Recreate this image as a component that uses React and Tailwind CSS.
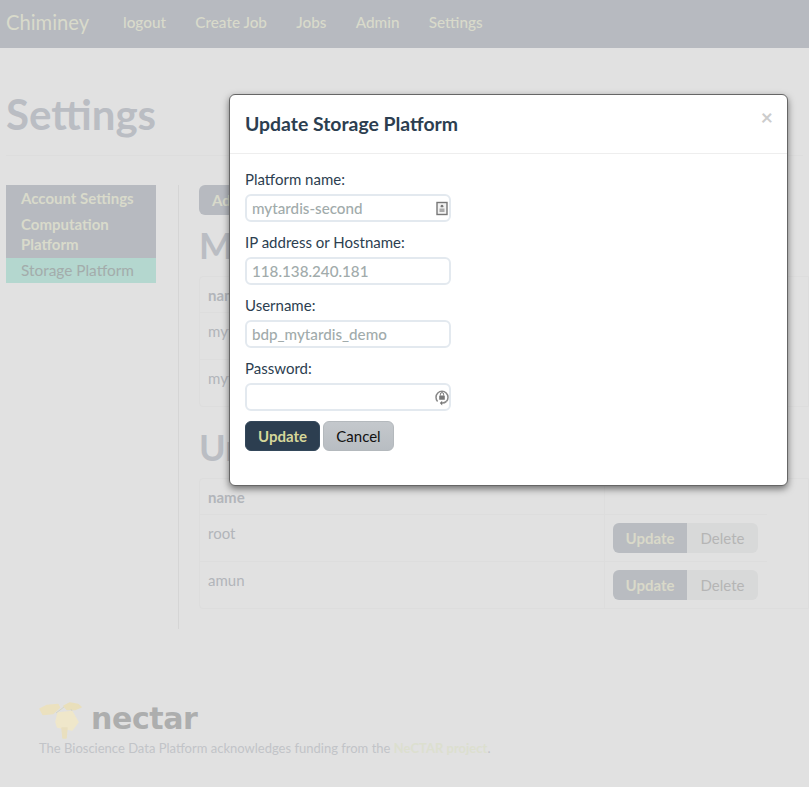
const navItems = ["logout", "Create Job", "Jobs", "Admin", "Settings"];

function Field({ label, value, icon }) {
  return (
    <div className="mb-[10px]">
      <div className="text-[15px] leading-[21px] mb-[4px] text-[#2c3e50]">{label}</div>
      <div className="relative w-[206px] h-[28px]">
        <input
          readOnly
          value={value}
          className="w-full h-full border-2 border-[#e3e9ef] rounded-[6px] px-[5px] text-[15.2px] font-medium text-[#a1abab] bg-white outline-none"
        />
        {icon && <span className="absolute right-0 top-[5px]">{icon}</span>}
      </div>
    </div>
  );
}

function CardIcon() {
  return (
    <svg width="18" height="18" viewBox="0 0 18 18">
      <rect x="4" y="3.5" width="10" height="12" fill="#f2f2f2" stroke="#777" strokeWidth="1.4" />
      <path d="M9 5.8a1.5 1.5 0 0 1 1.2 2.4H7.8A1.5 1.5 0 0 1 9 5.8z" fill="#777" />
      <rect x="6.5" y="9.5" width="5" height="3.5" fill="#aaa" />
    </svg>
  );
}

function KeyIcon() {
  return (
    <svg width="18" height="18" viewBox="0 0 18 18" fill="none">
      <path d="M4.6 13.4a6 6 0 1 1 8.8 0" stroke="#888" strokeWidth="1.5" />
      <path d="M13.4 13.4a6 6 0 0 1-4.4 1.7" stroke="#888" strokeWidth="1.5" />
      <path d="M9.2 12.8l-2.4 2.3 2.4 2.3z" fill="#777" />
      <rect x="6.2" y="7.5" width="5.6" height="4.2" rx="0.5" fill="#777" />
      <path d="M7.4 7.5V6.2a1.6 1.6 0 0 1 3.2 0v1.3" stroke="#777" strokeWidth="1" />
    </svg>
  );
}

function Table({ rows }) {
  return (
    <div className="relative w-[610px] border border-[#dddddd] rounded-l-[4px] text-[15px] leading-[20px]">
      <div className="flex h-[36px] border-b border-[#dddddd] w-[567px]">
        <div className="w-[405px] border-r border-[#dddddd] pl-[8px] pt-[8px] font-bold text-[#b2b5ba]">name</div>
      </div>
      {rows.map((r, i) => (
        <div key={r} className={"flex w-[567px] " + (i < rows.length - 1 ? "h-[47px] border-b border-[#dddddd]" : "h-[46px]")}>
          <div className="w-[405px] border-r border-[#dddddd] pl-[8px] pt-[8px] text-[#b2b5ba]">{r}</div>
          <div className="pl-[8px] pt-[8px] flex">
            <span className="w-[74px] h-[30px] bg-[#b9bcc1] rounded-l-[6px] text-[#d9d9c9] font-bold flex items-center justify-center text-[15px]">Update</span>
            <span className="w-[71px] h-[30px] bg-[#d8d9d9] rounded-r-[6px] text-[#b5b5b5] flex items-center justify-center text-[15px]">Delete</span>
          </div>
        </div>
      ))}
    </div>
  );
}

export default function App() {
  return (
    <div className="relative h-[787px] w-[809px] overflow-hidden bg-[#e1e1e1] font-['Lato',sans-serif]">
      <nav className="h-[48px] bg-[#b7bac0] flex items-center pl-[6px] pb-[3px] text-[#d9dacb]">
        <span className="text-[20.2px] w-[117px]">Chiminey</span>
        <div className="flex gap-[29.3px] text-[15.3px] font-medium">
          {navItems.map((n) => (
            <span key={n}>{n}</span>
          ))}
        </div>
      </nav>

      <div className="px-[6px]">
        <h1 className="text-[42px] leading-[43px] font-bold text-[#babdc3] mt-[45px] pb-[19px] border-b border-[#dddddd]">Settings</h1>

        <div className="flex mt-[29px]">
          <aside className="w-[150px] shrink-0 self-start text-[15px] leading-[20px] font-bold">
            <div className="bg-[#b7bac0] text-[#d9dacb] pl-[15px] pt-[3px]">
              <div className="pb-[6px]">Account Settings</div>
              <div className="pb-[4px]">Computation Platform</div>
            </div>
            <div className="bg-[#b4d7cf] text-[#a3acab] text-[15.4px] font-normal pl-[15px] h-[25px] leading-[25px]">Storage Platform</div>
          </aside>

          <main className="ml-[22px] border-l border-[#d5d5d5] pl-[20px] h-[444px]">
            <button className="h-[30px] px-[13px] bg-[#b7bac0] rounded-[6px] text-[15px] font-bold text-[#d9dacb]">Add Storage Platform</button>
            <h2 className="text-[36px] leading-[40px] font-bold text-[#babdc3] mt-[10px] mb-[11px] whitespace-nowrap">MyTardis Storage</h2>
            <Table rows={["mytardis-first", "mytardis-second"]} />
            <h2 className="text-[36px] leading-[40px] font-bold text-[#babdc3] mt-[20px] mb-[11px] whitespace-nowrap">Unix Storage</h2>
            <Table rows={["root", "amun"]} />
          </main>
        </div>
      </div>

      <footer className="absolute left-[39px] top-[702px]">
        <div className="flex items-start h-[37px]">
          <svg width="45" height="37" viewBox="0 0 45 37">
            <g strokeLinejoin="round" strokeWidth="1.5">
              <polygon points="1,7 8,3.5 19,2.5 20.5,5.5 14,11.5 4,12.5" fill="#ebe1bf" stroke="#ebe1bf" />
              <polygon points="25,4 31,1 39,2.5 42,5 36,7.5 28,7.5" fill="#e9dfbb" stroke="#e9dfbb" />
              <polygon points="19,11 33,9.5 39,20 33,28 18.5,25 17,20" fill="#efe7ca" stroke="#efe7ca" />
              <polygon points="23,26 28,26 27,36 24,36" fill="#e9dfbf" stroke="#e9dfbf" />
            </g>
            <path d="M17 11l8-6M33 9l-1-2" stroke="#d6d6c6" strokeWidth="1" />
          </svg>
          <span className="ml-[7px] font-['DejaVu_Sans',sans-serif] font-bold text-[30px] leading-[33px] text-[#adaeae] tracking-[-0.4px]">nectar</span>
        </div>
        <p className="text-[13px] leading-[18px] mt-[0px] text-[#c2c4c8] whitespace-nowrap">
          The Bioscience Data Platform acknowledges funding from the <span className="font-bold text-[#dcdfcf]">NeCTAR project</span>.
        </p>
      </footer>

      <div className="absolute left-[229px] top-[94px] w-[559px] h-[392px] bg-white rounded-[6px] border border-[#666666] shadow-[0_3px_7px_rgba(0,0,0,0.5)]">
        <div className="relative h-[59px] border-b border-[#eeeeee] pl-[15px] pt-[16px]">
          <h3 className="text-[19.4px] leading-[26px] font-bold text-[#2c3e50]">Update Storage Platform</h3>
          <span className="absolute right-[14px] top-[9px] text-[21px] font-bold leading-[26px] text-[#cccccc]">×</span>
        </div>
        <div className="pl-[15px] pt-[15px]">
          <Field label="Platform name:" value="mytardis-second" icon={<CardIcon />} />
          <Field label="IP address or Hostname:" value="118.138.240.181" />
          <Field label="Username:" value="bdp_mytardis_demo" />
          <Field label="Password:" value="" icon={<KeyIcon />} />
          <div className="flex gap-[3px]">
            <button className="w-[75px] h-[30px] rounded-[6px] bg-[#2c3e50] border border-[#33475a] text-[15px] font-bold text-[#d6d79a]">Update</button>
            <button className="w-[71px] h-[30px] rounded-[6px] bg-gradient-to-b from-[#c4c8cc] to-[#b8bdc2] border border-[#b4b9bd] text-[15px] text-[#111111]">Cancel</button>
          </div>
        </div>
      </div>
    </div>
  );
}
